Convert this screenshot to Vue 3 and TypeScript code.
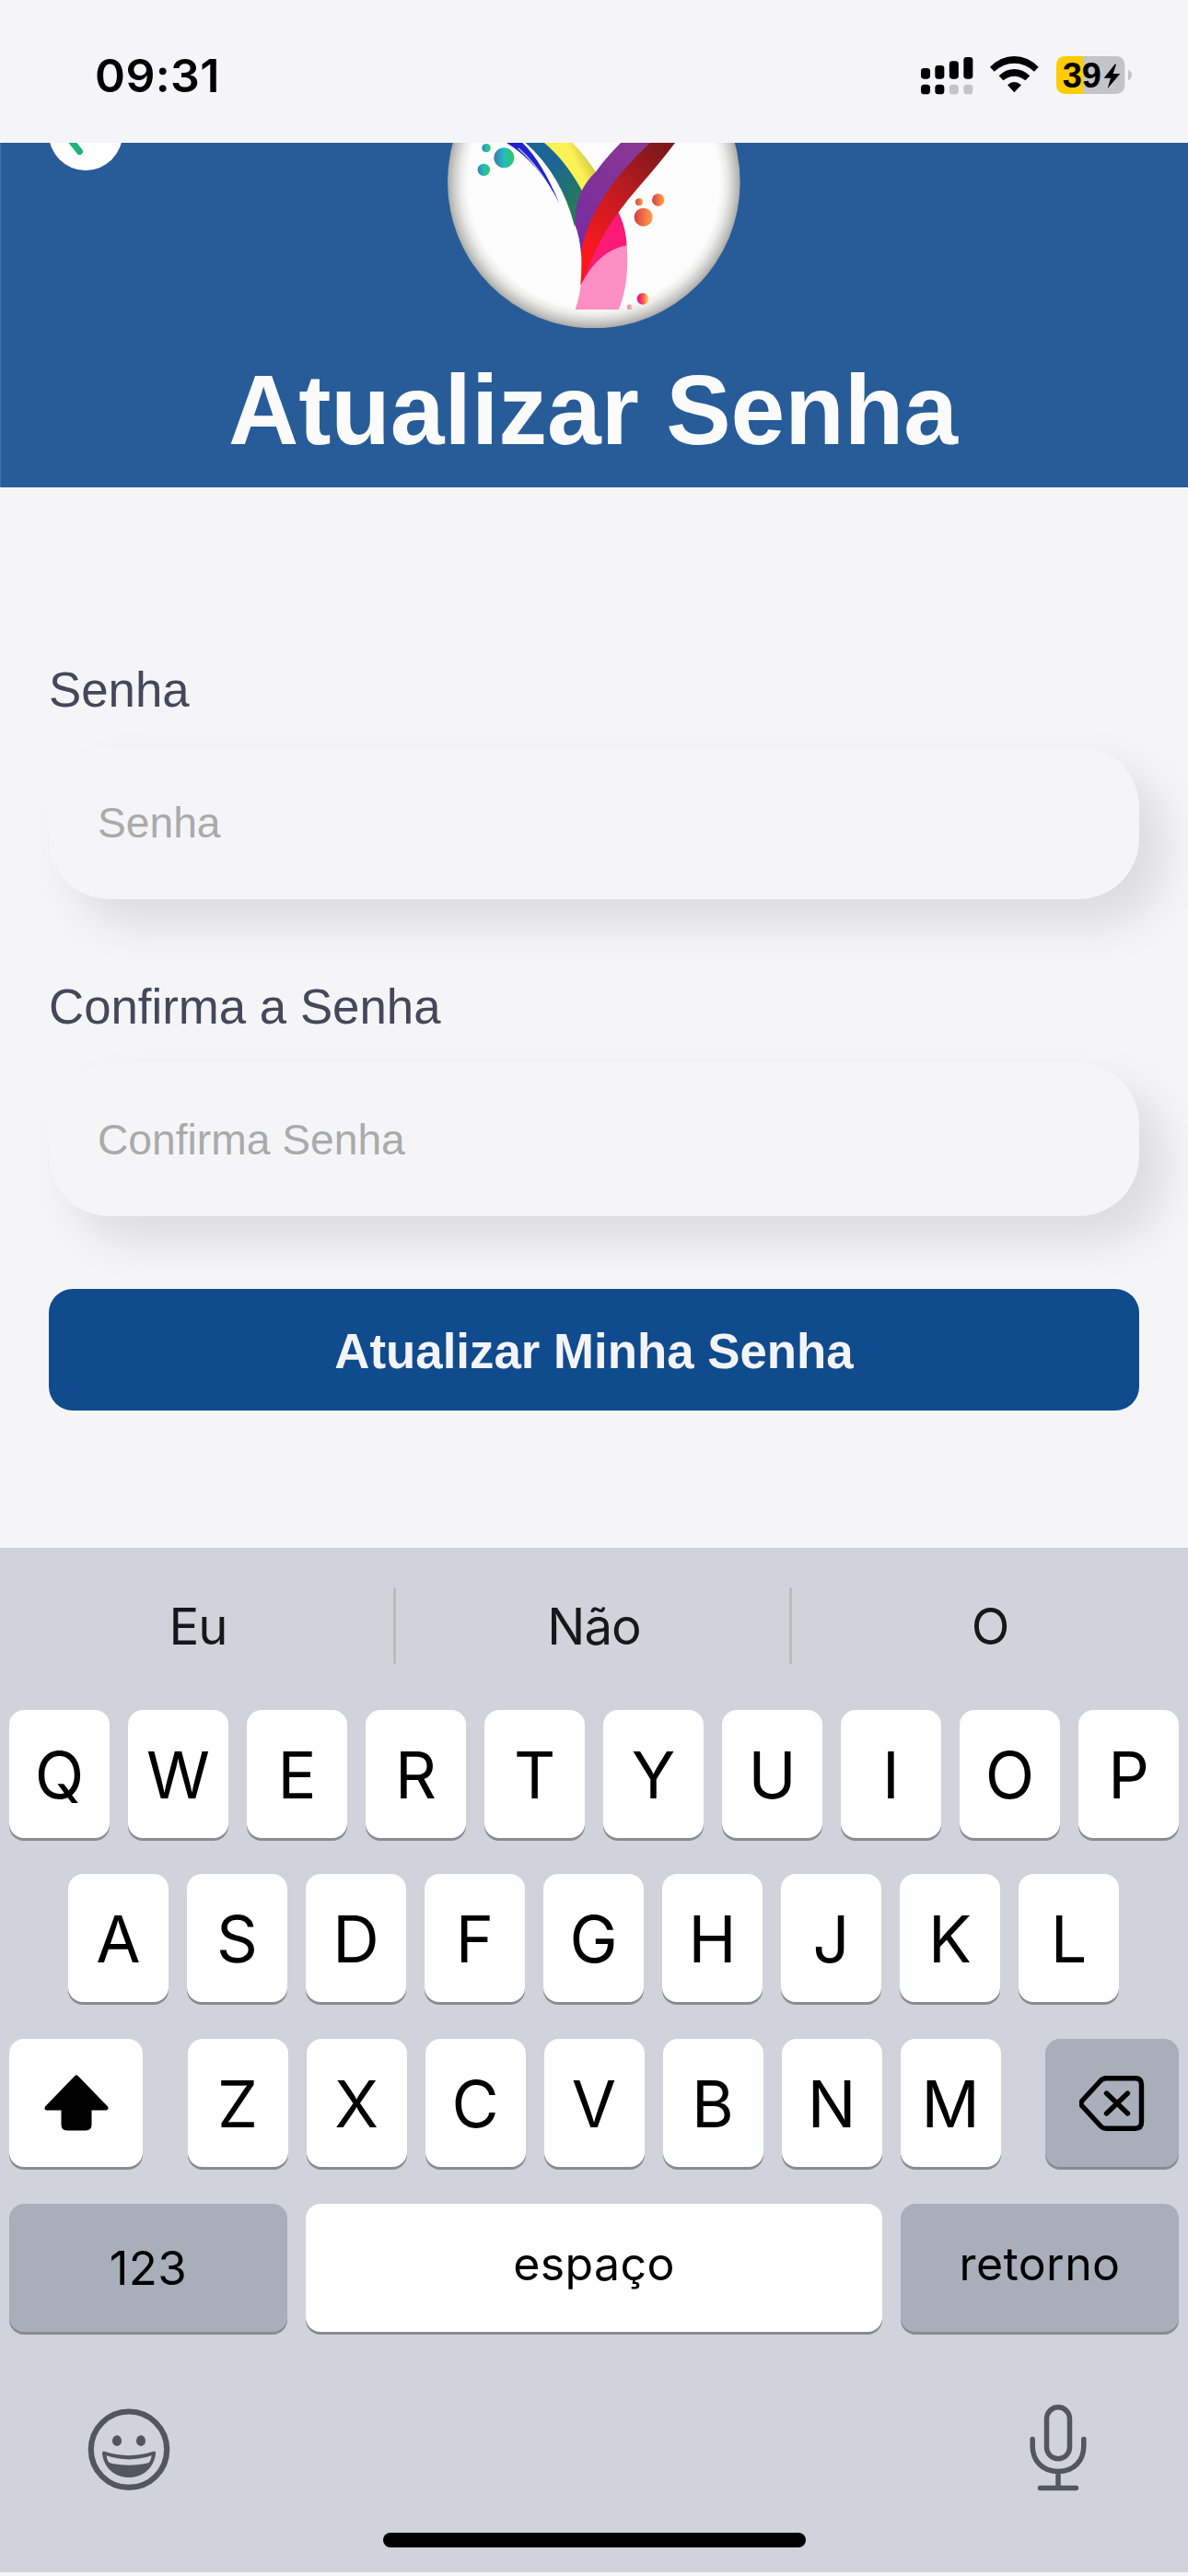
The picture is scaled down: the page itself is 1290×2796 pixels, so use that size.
<script setup lang="ts">
interface Field {
  label: string
  placeholder: string
}

const fields: Field[] = [
  { label: 'Senha', placeholder: 'Senha' },
  { label: 'Confirma a Senha', placeholder: 'Confirma Senha' },
]

const suggestions: string[] = ['Eu', 'Não', 'O']
const rowTop: string[] = [...'QWERTYUIOP']
const rowMiddle: string[] = [...'ASDFGHJKL']
const rowBottom: string[] = [...'ZXCVBNM']
</script>

<template>
  <div class="screen">
    <div class="status">
      <span class="time">09:31</span>
      <svg class="indicators" viewBox="120 93 687 124" width="229" height="41.33">
        <g fill="#000">
          <rect x="120" y="132" width="30" height="35" rx="10" />
          <rect x="166" y="123" width="30" height="44" rx="10" />
          <rect x="212.500" y="109" width="30" height="58" rx="10" />
          <rect x="259" y="96" width="30" height="71" rx="10" />
          <rect x="120" y="185" width="30" height="32" rx="11" />
          <rect x="166" y="185" width="30" height="32" rx="11" />
        </g>
        <g fill="#c4c4c6">
          <rect x="212.500" y="185" width="30" height="32" rx="11" />
          <rect x="259" y="185" width="30" height="32" rx="11" />
        </g>
        <path d="M345 128Q380 93 424 93Q468 93 503 128L489 143Q460 116 424 116Q388 116 359 143Z" />
        <path d="M374 157Q396 135 424 135Q452 135 475 157L460 172Q444 158 424 158Q404 158 388 172Z" />
        <path d="M402 187Q424 167 447 187L424 211Z" />
        <path d="M648 93H591Q561 93 561 123V186Q561 216 591 216H648Z" fill="#fc0" />
        <path d="M648 93H754Q784 93 784 123V186Q784 216 754 216H648Z" fill="#c4c4c6" />
        <path d="M795 137Q807 143 807 154.500Q807 166 795 172Z" fill="#c4c4c6" />
        <text x="581" y="195" class="charge">39</text>
        <path d="M753 118L716 164H738L728 198L769 150H746L756 120Z" />
      </svg>
    </div>

    <header class="header">
      <span class="back">
        <svg viewBox="0 0 80 80" width="80" height="80">
          <path d="M33.500 20L17.500 39.500L33.500 59.500" fill="none" stroke="#1db37a" stroke-width="7" stroke-linecap="round" stroke-linejoin="round" />
        </svg>
      </span>
      <svg class="logo" viewBox="78 45 954 604" width="318" height="201.33">
        <defs>
          <radialGradient id="disc" gradientUnits="userSpaceOnUse" cx="554.500" cy="172.500" r="477">
            <stop offset="0.860" stop-color="#fdfdfd" />
            <stop offset="0.910" stop-color="#ebebea" />
            <stop offset="0.960" stop-color="#cacac8" />
            <stop offset="1" stop-color="#aaaaa6" />
          </radialGradient>
          <linearGradient id="teal" gradientUnits="userSpaceOnUse" x1="380" y1="100" x2="520" y2="240">
            <stop offset="0.200" stop-color="#1c6494" />
            <stop offset="1" stop-color="#267c55" />
          </linearGradient>
          <linearGradient id="yellow" gradientUnits="userSpaceOnUse" x1="460" y1="120" x2="540" y2="80">
            <stop offset="0.400" stop-color="#fdf255" />
            <stop offset="1" stop-color="#cfc43c" />
          </linearGradient>
          <linearGradient id="red" gradientUnits="userSpaceOnUse" x1="530" y1="380" x2="790" y2="60">
            <stop offset="0" stop-color="#f8191f" />
            <stop offset="0.550" stop-color="#b81b20" />
            <stop offset="1" stop-color="#7a181b" />
          </linearGradient>
          <linearGradient id="purple" gradientUnits="userSpaceOnUse" x1="500" y1="300" x2="700" y2="50">
            <stop offset="0" stop-color="#792d9f" />
            <stop offset="1" stop-color="#8a3893" />
          </linearGradient>
          <linearGradient id="aqua">
            <stop offset="0" stop-color="#4477a8" />
            <stop offset="0.500" stop-color="#22bfc0" />
            <stop offset="1" stop-color="#30c65a" />
          </linearGradient>
          <linearGradient id="orange">
            <stop offset="0" stop-color="#c94444" />
            <stop offset="0.550" stop-color="#f5734a" />
            <stop offset="1" stop-color="#fda345" />
          </linearGradient>
          <linearGradient id="candy">
            <stop offset="0.200" stop-color="#ee1a7c" />
            <stop offset="0.600" stop-color="#f5704a" />
            <stop offset="1" stop-color="#f8dc70" />
          </linearGradient>
        </defs>
        <circle cx="554.500" cy="172.500" r="476.500" fill="url(#disc)" />
        <path d="M270 45H322Q385 105 442 242Q375 110 270 45Z" fill="#2222cc" />
        <path d="M308 62Q385 130 434 236" fill="none" stroke="#fff" stroke-width="4" opacity="0.700" />
        <path d="M332 45H400Q480 120 530 210L492 318Q450 150 332 45Z" fill="url(#teal)" />
        <path d="M393 45H485Q530 92 562 142L522 212Q465 105 393 45Z" fill="url(#yellow)" />
        <path d="M642 45H745Q570 210 522 400L513 408Q508 350 494 315Q487 210 562 138Q590 98 642 45Z" fill="url(#purple)" />
        <path d="M634 270Q660 320 662 385L600 440L517 505Q535 400 634 270Z" fill="#fb1a76" />
        <path d="M738 45H819Q770 110 700 190Q665 230 634 272Q560 370 517 508H511Q516 450 513 402Q540 230 738 45Z" fill="url(#red)" />
        <path d="M662 379Q570 395 512 508Q508 545 494 588H636Q671 500 662 379Z" fill="#fd8fc4" />
        <circle cx="262" cy="94" r="33" fill="url(#aqua)" />
        <circle cx="204" cy="62" r="14" fill="url(#aqua)" />
        <circle cx="196" cy="133" r="20" fill="url(#aqua)" />
        <circle cx="716" cy="287" r="30" fill="url(#orange)" />
        <circle cx="764" cy="231" r="20" fill="url(#orange)" />
        <circle cx="702" cy="238" r="12" fill="url(#orange)" />
        <circle cx="714" cy="553" r="19" fill="url(#candy)" />
        <circle cx="672" cy="580" r="9" fill="url(#candy)" opacity="0.500" />
      </svg>
      <h1 class="title">Atualizar Senha</h1>
    </header>

    <main class="form">
      <div v-for="field in fields" :key="field.label" class="group">
        <span class="label">{{ field.label }}</span>
        <div class="field"><span class="placeholder">{{ field.placeholder }}</span></div>
      </div>
      <div class="submit"><span class="submit-text">Atualizar Minha Senha</span></div>
    </main>

    <section class="keyboard">
      <div class="suggestions">
        <span v-for="word in suggestions" :key="word" class="suggestion">{{ word }}</span>
      </div>
      <div class="row">
        <span v-for="key in rowTop" :key="key" class="key">{{ key }}</span>
      </div>
      <div class="row middle">
        <span v-for="key in rowMiddle" :key="key" class="key">{{ key }}</span>
      </div>
      <div class="row spread">
        <span class="key side">
          <svg viewBox="0 0 70 61" width="70" height="61">
            <path d="M35 3L67 36H49V54Q49 58 45 58H25Q21 58 21 54V36H3Z" stroke="#000" stroke-width="5" stroke-linejoin="round" />
          </svg>
        </span>
        <div class="letters">
          <span v-for="key in rowBottom" :key="key" class="key">{{ key }}</span>
        </div>
        <span class="key side dark">
          <svg viewBox="1 0 72 60" width="72" height="60" fill="none" stroke="#000" stroke-width="5.400" stroke-linecap="round" stroke-linejoin="round">
            <path d="M30 2.800H61.500Q68.500 2.800 68.500 9.800V50.200Q68.500 57.200 61.500 57.200H30Q26.500 57.200 24 54.500L4.200 33Q1.600 30 4.200 27L24 5.500Q26.500 2.800 30 2.800Z" />
            <path d="M30.500 19L53.500 41M53.500 19L30.500 41" />
          </svg>
        </span>
      </div>
      <div class="row">
        <span class="key word numbers dark">123</span>
        <span class="key word space">espaço</span>
        <span class="key word dark">retorno</span>
      </div>
      <div class="tools">
        <svg viewBox="0 0 90 90" width="90" height="90">
          <circle cx="45" cy="44.700" r="41.200" fill="none" stroke="#52565e" stroke-width="6.200" />
          <ellipse cx="32" cy="35.200" rx="5" ry="5.900" fill="#52565e" />
          <ellipse cx="58" cy="35.200" rx="5" ry="5.900" fill="#52565e" />
          <path fill="#52565e" fill-rule="evenodd" d="M18.500 46.800Q45 55.500 71.500 46.800Q74.500 46 74 49.500C72 65 60 75 45 75S18 65 16 49.500Q15.500 46 18.500 46.800ZM20.500 51.300Q21 55 22.700 58Q24 59.500 27 60Q45 63.500 63 60Q66.500 59.500 67.500 58Q69.200 55 69.700 51.300Q45 59.500 20.500 51.300Z" />
        </svg>
        <svg viewBox="0 0 62 94" width="62" height="94" fill="none" stroke="#52565e" stroke-width="5.500" stroke-linecap="round">
          <rect x="18.500" y="2.800" width="25" height="56" rx="12.500" />
          <path d="M3.200 37.500V45C3.200 61 14 72.500 31 72.500S58.800 61 58.800 45V37.500M31 72.500V90.500M11.500 90.500H50.500" />
        </svg>
      </div>
      <div class="home-bar"></div>
    </section>
  </div>
</template>

<style>
body {
  margin: 0;
  background: #f4f4f7;
}
</style>

<style scoped>
.screen {
  width: 1290px;
  height: 2796px;
  overflow: hidden;
  background: #f5f5f8;
  font-family: "Liberation Sans", Arial, sans-serif;
}

.status {
  box-sizing: border-box;
  height: 155px;
  padding: 9px 61px 0 103px;
  display: flex;
  align-items: center;
  justify-content: space-between;
}

.time {
  font: 600 50px/60px Inter, sans-serif;
  letter-spacing: 0.4px;
}

.charge {
  font: 700 114px "Liberation Sans", Arial, sans-serif;
}

.header {
  position: relative;
  box-sizing: border-box;
  height: 374px;
  overflow: hidden;
  display: flex;
  flex-direction: column;
  align-items: center;
  background: #275c98;
  box-shadow: inset 1px 0 0 #4a6fa5;
}

.back {
  position: absolute;
  left: 53px;
  top: -50px;
  width: 80px;
  height: 80px;
  border-radius: 50%;
  background: #fff;
}

.logo {
  display: block;
  flex: none;
}

.title {
  margin: 0;
  padding: 2px 2px 0 0;
  font-size: 105.6px;
  line-height: 173px;
  font-weight: 700;
  color: #fbfbfc;
  white-space: nowrap;
  transform: scaleY(1.02);
}

.form {
  box-sizing: border-box;
  height: 1151px;
  padding: 189px 53px 0;
}

.group {
  display: flex;
  flex-direction: column;
  align-items: flex-start;
  margin-bottom: 86px;
}

.label {
  padding-top: 1px;
  font-size: 52.8px;
  line-height: 60px;
  color: #45475a;
  transform: scaleY(1.02);
}

.field {
  box-sizing: border-box;
  width: 100%;
  height: 166px;
  margin-top: 31px;
  padding-left: 53px;
  display: flex;
  align-items: center;
  border-radius: 66px;
  background: #f5f5f8;
  box-shadow: 26px 26px 48px rgba(0, 0, 0, 0.1);
}

.placeholder {
  font-size: 46.2px;
  color: #aaaaaa;
  transform: scaleY(1.02);
}

.submit {
  box-sizing: border-box;
  height: 132px;
  margin-top: -7px;
  padding-top: 2px;
  display: flex;
  align-items: center;
  justify-content: center;
  position: relative;
  border-radius: 26px;
  background: #104b8d;
}

.submit-text {
  font-size: 52.8px;
  font-weight: 700;
  color: #f4f4f8;
  transform: scaleY(1.02);
}

.keyboard {
  height: 1112px;
  background: #d0d3db;
  font-family: Inter, sans-serif;
  color: #000;
}

.suggestions {
  height: 176px;
  display: flex;
  align-items: flex-start;
}

.suggestion {
  flex: 1;
  height: 83px;
  margin-top: 43px;
  line-height: 84px;
  text-align: center;
  font-size: 54.5px;
  letter-spacing: -1px;
  color: #161718;
}

.suggestion + .suggestion {
  box-shadow: -3px 0 0 #babdc2;
}

.row {
  display: flex;
  justify-content: center;
  gap: 20px;
  height: 139px;
  margin: 0 10px 40px;
}

.suggestions + .row {
  margin-bottom: 39px;
}

.middle {
  margin-right: 11px;
}

.spread {
  justify-content: space-between;
}

.letters {
  display: flex;
  gap: 20px;
}

.key {
  box-sizing: border-box;
  width: 109px;
  height: 139px;
  padding-top: 2px;
  display: flex;
  align-items: center;
  justify-content: center;
  border-radius: 16px;
  background: #fff;
  box-shadow: 0 3px 0 #898b8f;
  font-size: 70px;
  line-height: 84px;
}

.side {
  width: 145px;
  padding-top: 0;
}

.dark {
  background: #a9aebb;
}

.word {
  width: 302px;
  padding: 0 0 9px;
  font-size: 50px;
  letter-spacing: 0.4px;
}

.numbers {
  padding-bottom: 0;
  font-size: 51px;
}

.space {
  width: 626px;
}

.tools {
  height: 94px;
  margin-top: 79px;
  padding: 0 110.5px 0 95px;
  display: flex;
  align-items: flex-end;
  justify-content: space-between;
}

.home-bar {
  width: 459px;
  height: 16px;
  margin: 45px auto 0;
  border-radius: 8px;
  background: #000;
}
</style>
